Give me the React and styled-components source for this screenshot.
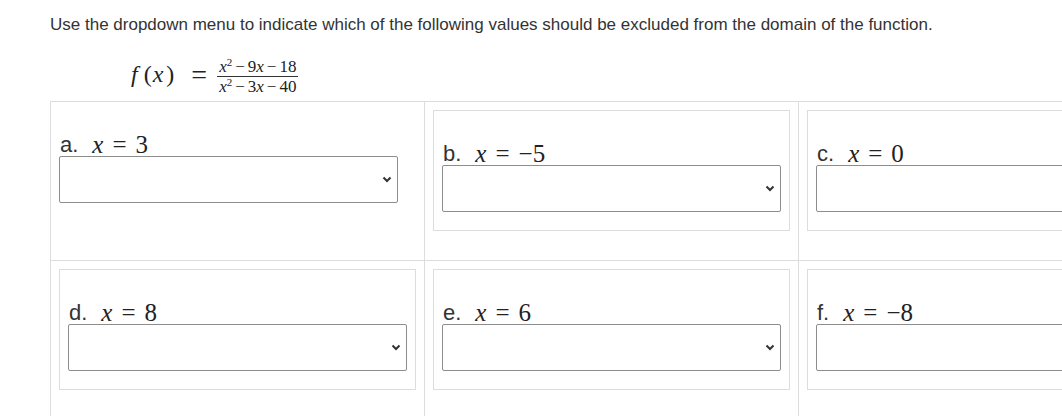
import styled, { createGlobalStyle } from 'styled-components'

const GlobalStyle = createGlobalStyle`
   html, body {
      margin: 0;
      padding: 0;
      overflow: hidden;
      background: #fff;
   }
   body {
      font-family: 'Liberation Sans', Arial, sans-serif;
      color: #333;
   }
`

const Page = styled.div`
   padding: 15px 0 0 50px;
   width: 1200px;
`

const Prompt = styled.p`
   margin: 0;
   font-size: 17px;
   line-height: 19px;
`

const Formula = styled.div`
   display: flex;
   align-items: center;
   height: 50px;
   margin: 15px 0 2px 81px;
   font-family: 'Liberation Serif', 'Times New Roman', serif;
   font-size: 24px;
   color: #222;
`

const Mi = styled.span`
   font-style: italic;
   margin: 0 ${(props) => props.right || '0'} 0 ${(props) => props.left || '0'};
`

const Mo = styled.span`
   margin: 0 ${(props) => props.right || '0'} 0 ${(props) => props.left || '0'};
`

const Rel = styled.span`
   font-size: 28px;
   margin: 2px 10px 0 17px;
`

const Frac = styled.span`
   display: inline-flex;
   flex-direction: column;
   align-items: center;
   font-size: 17px;
   line-height: 17px;
   margin-top: 4px;
`

const Num = styled.span`
   padding: 0 2px 1px;
   border-bottom: 1px solid #333;
`

const Den = styled.span`
   padding: 1px 2px 0;
`

const Sup = styled.sup`
   font-size: 11px;
   line-height: 0;
   vertical-align: 6px;
`

const Minus = styled.span`
   margin: 0 3px;
`

const Grid = styled.div`
   display: grid;
   grid-template-columns: repeat(3, 374px);
`

const Cell = styled.div`
   border-top: 1px solid #ddd;
   border-left: 1px solid #ddd;
   padding: 8px 8px 28px;
   min-height: ${(props) => (props.bare ? '122px' : 'auto')};
`

const Box = styled.div`
   border: 1px solid #ddd;
   padding: 8px 8px 18px;
`

const Label = styled.div`
   height: 46px;
   display: flex;
   align-items: flex-end;
   font-size: 22px;
   line-height: 22px;
   padding-left: 1px;
`

const Letter = styled.span`
   margin-right: 14px;
`

const MathText = styled.span`
   font-family: 'Liberation Serif', 'Times New Roman', serif;
   font-size: 25px;
   color: #222;
`

const Select = styled.div`
   box-sizing: border-box;
   width: 339px;
   height: 47px;
   border: 1px solid #8d8d8d;
   border-radius: 2px;
   background: #fff;
   display: flex;
   align-items: center;
   justify-content: flex-end;
   padding-right: 5px;
`

const Chevron = () => (
   <svg width="10" height="7" viewBox="0 0 10 7">
      <path d="M1.5 1.5 5 5 8.5 1.5" fill="none" stroke="#333" strokeWidth="2" />
   </svg>
)

const items = [
   { letter: 'a.', value: '3', bare: true },
   { letter: 'b.', value: '\u22125' },
   { letter: 'c.', value: '0' },
   { letter: 'd.', value: '8' },
   { letter: 'e.', value: '6' },
   { letter: 'f.', value: '\u22128' },
]

function Choice({ letter, value }) {
   return (
      <>
         <Label>
            <Letter>{letter}</Letter>
            <MathText>
               <Mi>x</Mi>
               <Mo left="9px" right="9px">
                  =
               </Mo>
               {value}
            </MathText>
         </Label>
         <Select>
            <Chevron />
         </Select>
      </>
   )
}

export default function App() {
   return (
      <>
         <GlobalStyle />
         <Page>
            <Prompt>
               Use the dropdown menu to indicate which of the following values should be excluded from the
               domain of the function.
            </Prompt>
            <Formula>
               <Mi right="6px">f</Mi>
               <Mo>(</Mo>
               <Mi left="1px" right="3px">
                  x
               </Mi>
               <Mo>)</Mo>
               <Rel>=</Rel>
               <Frac>
                  <Num>
                     <Mi>x</Mi>
                     <Sup>2</Sup>
                     <Minus>−</Minus>9<Mi>x</Mi>
                     <Minus>−</Minus>18
                  </Num>
                  <Den>
                     <Mi>x</Mi>
                     <Sup>2</Sup>
                     <Minus>−</Minus>3<Mi>x</Mi>
                     <Minus>−</Minus>40
                  </Den>
               </Frac>
            </Formula>
            <Grid>
               {items.map((item) => (
                  <Cell key={item.letter} bare={item.bare}>
                     {item.bare ? (
                        <Choice {...item} />
                     ) : (
                        <Box>
                           <Choice {...item} />
                        </Box>
                     )}
                  </Cell>
               ))}
            </Grid>
         </Page>
      </>
   )
}
